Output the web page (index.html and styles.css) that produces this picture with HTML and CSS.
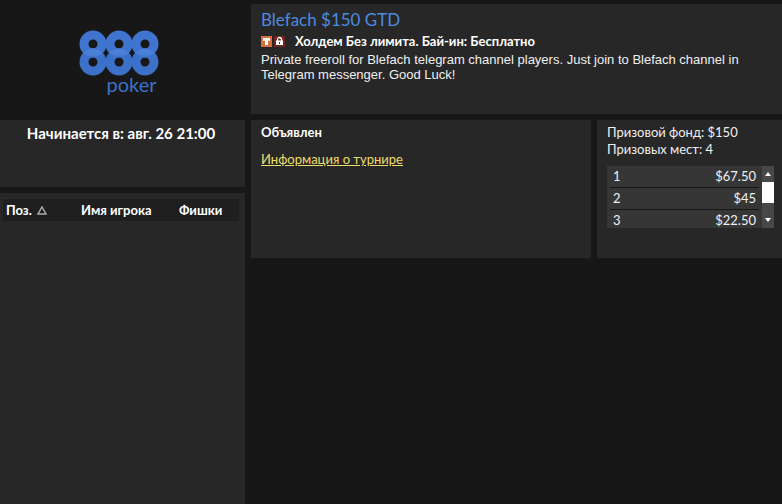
FILE: index.html
```
<!DOCTYPE html>
<html lang="ru">

<head>
    <meta charset="UTF-8">
    <meta name="viewport" content="width=device-width, initial-scale=1.0">
    <title>Blefach $150 GTD</title>
    <link rel="stylesheet" href="styles.css">
</head>

<body>
    <div class="lobby">
        <aside class="side">
            <div class="logo">
                <svg class="rings" width="80" height="46" viewBox="0 0 80 46" aria-hidden="true">
                    <g fill="none" stroke="#3b71c9" stroke-width="9">
                        <circle cx="14" cy="32" r="9" />
                        <circle cx="40" cy="32" r="9" />
                        <circle cx="66" cy="32" r="9" />
                    </g>
                    <g fill="none" stroke="#3f75ce" stroke-width="9">
                        <circle cx="14" cy="14" r="9" />
                        <circle cx="40" cy="14" r="9" />
                        <circle cx="66" cy="14" r="9" />
                    </g>
                    <g fill="#4a80d8">
                        <path d="M4 23q10-9 20 0q-10 6-20 0z" />
                        <path d="M30 23q10-9 20 0q-10 6-20 0z" />
                        <path d="M56 23q10-9 20 0q-10 6-20 0z" />
                    </g>
                </svg>
                <span class="brand">poker</span>
            </div>
            <div class="panel starts">Начинается в: авг. 26 21:00</div>
            <div class="panel players">
                <table class="players-table">
                    <thead>
                        <tr>
                            <th class="col-pos">Поз.
                                <svg width="12" height="9" viewBox="0 0 12 9" aria-hidden="true">
                                    <path d="M7 1L11 8H3z" fill="none" stroke="#aaa" stroke-width="1.5" />
                                </svg>
                            </th>
                            <th class="col-name">Имя игрока</th>
                            <th>Фишки</th>
                        </tr>
                    </thead>
                </table>
            </div>
        </aside>

        <main class="main">
            <section class="panel info">
                <h1>Blefach $150 GTD</h1>
                <div class="game">
                    <svg width="24" height="11" viewBox="0 0 24 11" aria-hidden="true">
                        <rect width="11" height="11" fill="#d5713f" />
                        <path d="M2 2h7v3H8L7 4v5H4V4L3 5H2z" fill="#fff" />
                        <rect x="13" width="11" height="11" fill="#6e2620" />
                        <path d="M16.500 5V3.500a2 2 0 0 1 4 0V5" fill="none" stroke="#fff" stroke-width="1.300" />
                        <path d="M15 4.500h7V9h-7z" fill="#fff" />
                        <path d="M18 6h1v2h-1z" fill="#6e2620" />
                    </svg>
                    <h2>Холдем Без лимита. Бай-ин: Бесплатно</h2>
                </div>
                <p>Private freeroll for Blefach telegram channel players. Just join to Blefach channel in Telegram messenger. Good Luck!</p>
            </section>

            <div class="row">
                <section class="panel status">
                    <h2>Объявлен</h2>
                    <a href="#">Информация о турнире</a>
                </section>

                <section class="panel prizes">
                    <div>Призовой фонд: $150</div>
                    <div>Призовых мест: 4</div>
                    <div class="prize-list">
                        <table class="prize-table">
                            <tbody>
                                <tr>
                                    <td>1</td>
                                    <td>$67.50</td>
                                </tr>
                                <tr>
                                    <td>2</td>
                                    <td>$45</td>
                                </tr>
                                <tr>
                                    <td>3</td>
                                    <td>$22.50</td>
                                </tr>
                            </tbody>
                        </table>
                        <div class="scroll">
                            <button type="button" class="up" aria-label="Вверх"></button>
                            <div class="thumb"></div>
                            <button type="button" class="down" aria-label="Вниз"></button>
                        </div>
                    </div>
                </section>
            </div>
        </main>
    </div>
</body>

</html>
```
FILE: styles.css
```
* {
    box-sizing: border-box;
}

body {
    margin: 0;
    background-color: #171717;
    color: #f0f0f0;
    font-family: Lato, Inter, sans-serif;
    font-size: 13px;
    line-height: 17px;
}

h1,
h2,
p {
    margin: 0;
}

h2 {
    font-size: 13px;
    font-weight: bold;
    color: #fff;
}

.lobby {
    display: grid;
    grid-template-columns: 245px 1fr;
    gap: 6px;
    min-height: 100vh;
}

.panel {
    background-color: #272727;
}

.side {
    display: flex;
    flex-direction: column;
    gap: 6px;
}

.logo {
    display: flex;
    flex-direction: column;
    align-items: center;
    height: 114px;
    padding-top: 30px;
}

.rings {
    flex: none;
    margin-right: 8px;
}

.brand {
    margin-left: 18px;
    color: #3b71c9;
    font-size: 20px;
    line-height: 17px;
}

.starts {
    height: 67px;
    padding: 5px 3px 0 0;
    text-align: center;
    font-size: 15px;
    font-weight: bold;
    color: #fff;
}

.players {
    flex: 1;
    padding: 6px 6px 6px 3px;
}

.players-table {
    width: 100%;
    border-collapse: collapse;
    background-color: #1f1f1f;
    table-layout: fixed;
}

.players-table th {
    height: 22px;
    padding: 0 3px;
    text-align: left;
    font-size: 13px;
    color: #fff;
}

.col-pos {
    width: 75px;
}

.col-name {
    width: 98px;
}

.main {
    display: flex;
    flex-direction: column;
    gap: 6px;
    padding-top: 4px;
}

.info {
    height: 110px;
    padding: 5px 10px;
}

.info h1 {
    font-size: 17px;
    font-weight: normal;
    line-height: 21px;
    color: #4b8be0;
}

.game {
    display: flex;
    align-items: center;
    gap: 10px;
    height: 22px;
}

.info p {
    font-family: "Liberation Sans", Arial, sans-serif;
    line-height: 15px;
}

.row {
    display: grid;
    grid-template-columns: 1fr 185px;
    gap: 6px;
    min-height: 138px;
}

.status {
    padding: 4px 10px;
}

.status a {
    display: inline-block;
    margin-top: 10px;
    color: #f0dc6c;
}

.prizes {
    padding: 4px 8px 4px 10px;
}

.prize-list {
    display: flex;
    height: 62px;
    margin-top: 8px;
    overflow: hidden;
    background-color: #363636;
}

.prize-table {
    flex: 1;
    margin: 0 3px;
    border-spacing: 0;
}

.prize-table td {
    height: 22px;
    padding: 0 3px;
    border-bottom: 1px solid #171717;
    font-size: 13px;
}

.prize-table td:last-child {
    text-align: right;
}

.scroll {
    display: flex;
    flex-direction: column;
    width: 12px;
    background-color: #484848;
}

.scroll button {
    height: 16px;
    padding: 0;
    border: none;
    background: none;
}

.scroll button::before {
    content: "";
    display: block;
    width: 0;
    margin: 0 auto;
    border: 3px solid transparent;
}

.scroll .up::before {
    border-top: none;
    border-bottom: 4px solid #fff;
}

.scroll .down::before {
    border-bottom: none;
    border-top: 4px solid #fff;
}

.thumb {
    height: 21px;
    margin-bottom: auto;
    background-color: #fff;
}
```
